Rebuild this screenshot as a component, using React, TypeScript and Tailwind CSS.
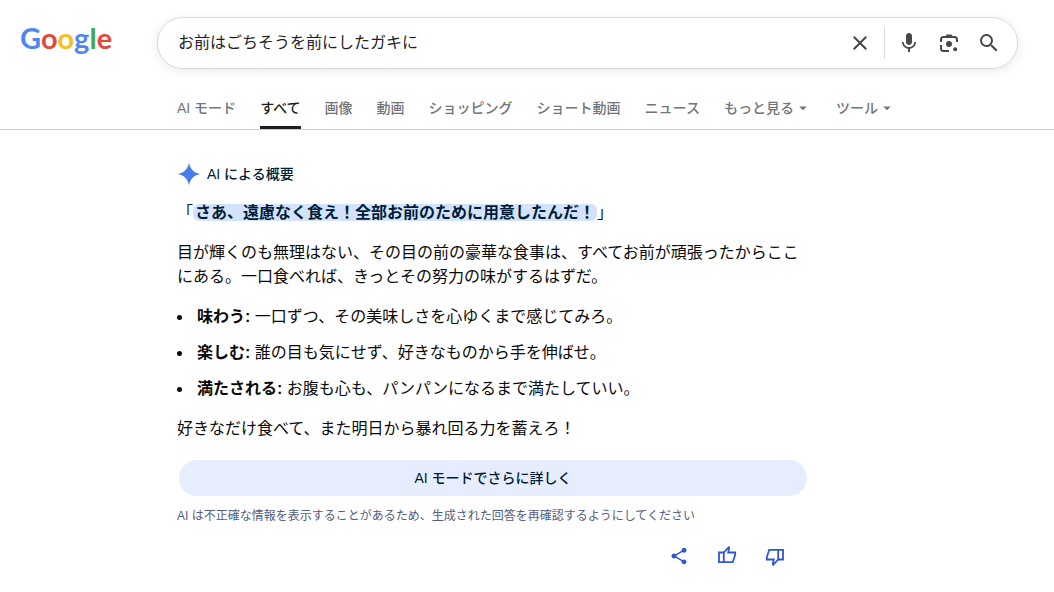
import React, { useState } from 'react';
import { MdArrowDropDown, MdClose, MdMic, MdSearch, MdShare } from 'react-icons/md';

const LOGO = [
  { char: 'G', color: 'text-[#4f86f0]' },
  { char: 'o', color: 'text-[#e24a3b]' },
  { char: 'o', color: 'text-[#f6bd27]' },
  { char: 'g', color: 'text-[#4f86f0]' },
  { char: 'l', color: 'text-[#41a756]' },
  { char: 'e', color: 'text-[#e24a3b]' },
];

const TABS = ['AI モード', 'すべて', '画像', '動画', 'ショッピング', 'ショート動画', 'ニュース'];

const MENUS = ['もっと見る', 'ツール'];

const POINTS = [
  { title: '味わう:', text: '一口ずつ、その美味しさを心ゆくまで感じてみろ。' },
  { title: '楽しむ:', text: '誰の目も気にせず、好きなものから手を伸ばせ。' },
  { title: '満たされる:', text: 'お腹も心も、パンパンになるまで満たしていい。' },
];

function LensIcon() {
  return (
    <svg viewBox="0 0 20 20" className="h-5 w-5" fill="none" stroke="currentColor" strokeWidth="2">
      <path d="M2 9V6.500A2.500 2.500 0 0 1 4.500 4h11A2.500 2.500 0 0 1 18 6.500V9" />
      <path d="M2 12v3.500A2.500 2.500 0 0 0 4.500 18H10" />
      <path d="M6 4l1.500-2.500h5L14 4z" fill="currentColor" stroke="none" />
      <circle cx="10" cy="11" r="3" fill="currentColor" stroke="none" />
      <circle cx="16.200" cy="16.200" r="2" fill="currentColor" stroke="none" />
    </svg>
  );
}

function SparkIcon() {
  return (
    <svg viewBox="0 0 24 24" className="h-6 w-6 shrink-0" fill="#4a7bec">
      <path d="M12 .5c.9 6.300 5.200 10.600 11.500 11.500-6.300.9-10.600 5.200-11.500 11.500C11.100 17.200 6.800 12.900.5 12 6.800 11.100 11.100 6.800 12 .5z" />
    </svg>
  );
}

function ThumbIcon({ down = false }: { down?: boolean }) {
  return (
    <svg
      viewBox="0 0 20 20"
      className={down ? 'h-5 w-5 rotate-180' : 'h-5 w-5'}
      fill="none"
      stroke="currentColor"
      strokeWidth="1.800"
    >
      <path d="M2 6.500h4.800v9.700H2z" />
      <path d="M6.800 6.500l5-5.300.4.500-1 4.800h7v2.200l-2.400 7.500h-9" />
    </svg>
  );
}

function SearchBar() {
  const [query, setQuery] = useState('お前はごちそうを前にしたガキに');
  const button = 'flex h-10 w-10 items-center justify-center text-[#474747]';

  return (
    <form
      role="search"
      onSubmit={(e) => e.preventDefault()}
      className="flex h-[52px] min-w-0 flex-1 items-center rounded-full border border-[#d9dbde] bg-white pl-5 pr-2 shadow-[0_2px_8px_1px_rgba(64,60,67,0.09)]"
    >
      <input
        type="text"
        aria-label="検索"
        value={query}
        onChange={(e) => setQuery(e.target.value)}
        className="min-w-0 flex-1 text-base text-[#1f1f1f] outline-none"
      />
      <button type="button" aria-label="クリア" onClick={() => setQuery('')} className={button}>
        <MdClose className="h-6 w-6" />
      </button>
      <span className="mx-1 h-8 w-px bg-[#dadce0]" />
      <button type="button" aria-label="音声検索" className={button}>
        <MdMic className="h-6 w-6" />
      </button>
      <button type="button" aria-label="画像で検索" className={button}>
        <LensIcon />
      </button>
      <button type="submit" aria-label="Google 検索" className={button}>
        <MdSearch className="h-6 w-6" />
      </button>
    </form>
  );
}

export default function App() {
  const [active, setActive] = useState('すべて');

  return (
    <div className="min-h-screen bg-white font-['Liberation_Sans','Noto_Sans_CJK_JP',sans-serif] text-[#0a0a0a]">
      <header className="border-b border-[#c9cccf]">
        <div className="flex items-center pr-9 pt-[17px]">
          <div className="w-[157px] shrink-0 pb-2 pl-5">
            <a href="#" aria-label="Google" className="font-['Lato',sans-serif] text-[29px] font-bold leading-8">
              {LOGO.map((l, i) => (
                <span key={i} className={l.color}>{l.char}</span>
              ))}
            </a>
          </div>
          <SearchBar />
        </div>

        <nav className="mt-[18px] flex h-[42px] gap-6 whitespace-nowrap pl-[177px] text-sm font-medium text-[#70757a]">
          {TABS.map((tab) => (
            <a
              key={tab}
              href="#"
              onClick={() => setActive(tab)}
              className={`flex items-center border-b-3 pt-[3px] ${
                tab === active ? 'border-[#1f1f1f] text-[#1f1f1f]' : 'border-transparent'
              }`}
            >
              {tab}
            </a>
          ))}
          {MENUS.map((menu) => (
            <button key={menu} type="button" className="flex items-center">
              {menu}
              <MdArrowDropDown className="h-[18px] w-[18px]" />
            </button>
          ))}
        </nav>
      </header>

      {/* AI overview */}
      <main className="max-w-[809px] pl-[177px] pt-8">
        <div className="flex h-6 items-center gap-[6px] text-sm font-medium text-[#001d35]">
          <SparkIcon />
          <h1>AI による概要</h1>
        </div>

        <div className="mt-[15px] space-y-4 text-base leading-6">
          <p className="text-[#001d35]">
            「<mark className="rounded-md bg-[#d3e3fd] px-[2px] font-bold text-[#001d35]">さあ、遠慮なく食え！全部お前のために用意したんだ！</mark>」
          </p>
          <p>
            目が輝くのも無理はない、その目の前の豪華な食事は、すべてお前が頑張ったからここにある。一口食べれば、きっとその努力の味がするはずだ。
          </p>
          <ul className="space-y-3">
            {POINTS.map((p) => (
              <li key={p.title} className="flex items-center">
                <span className="mr-[15px] h-[5px] w-[5px] rounded-full bg-[#0a0a0a]" />
                <span>
                  <strong className="font-bold">{p.title}</strong> {p.text}
                </span>
              </li>
            ))}
          </ul>
          <p>好きなだけ食べて、また明日から暴れ回る力を蓄えろ！</p>
        </div>

        <div className="mt-[19px] px-[2px]">
          <button
            type="button"
            className="h-9 w-full rounded-full bg-[#e5edff] text-sm font-medium text-[#001d35]"
          >
            AI モードでさらに詳しく
          </button>
        </div>
        <p className="mt-3 text-xs text-[#545d7e]">
          AI は不正確な情報を表示することがあるため、生成された回答を再確認するようにしてください
        </p>

        <div className="mt-3 flex justify-end pr-[10px] text-[#2f56d0]">
          <button type="button" aria-label="共有" className="flex h-10 w-12 items-center justify-center">
            <MdShare className="h-5 w-5" />
          </button>
          <button type="button" aria-label="高く評価" className="flex h-10 w-12 items-center justify-center">
            <ThumbIcon />
          </button>
          <button type="button" aria-label="低く評価" className="flex h-10 w-12 items-center justify-center">
            <ThumbIcon down />
          </button>
        </div>
      </main>
    </div>
  );
}
